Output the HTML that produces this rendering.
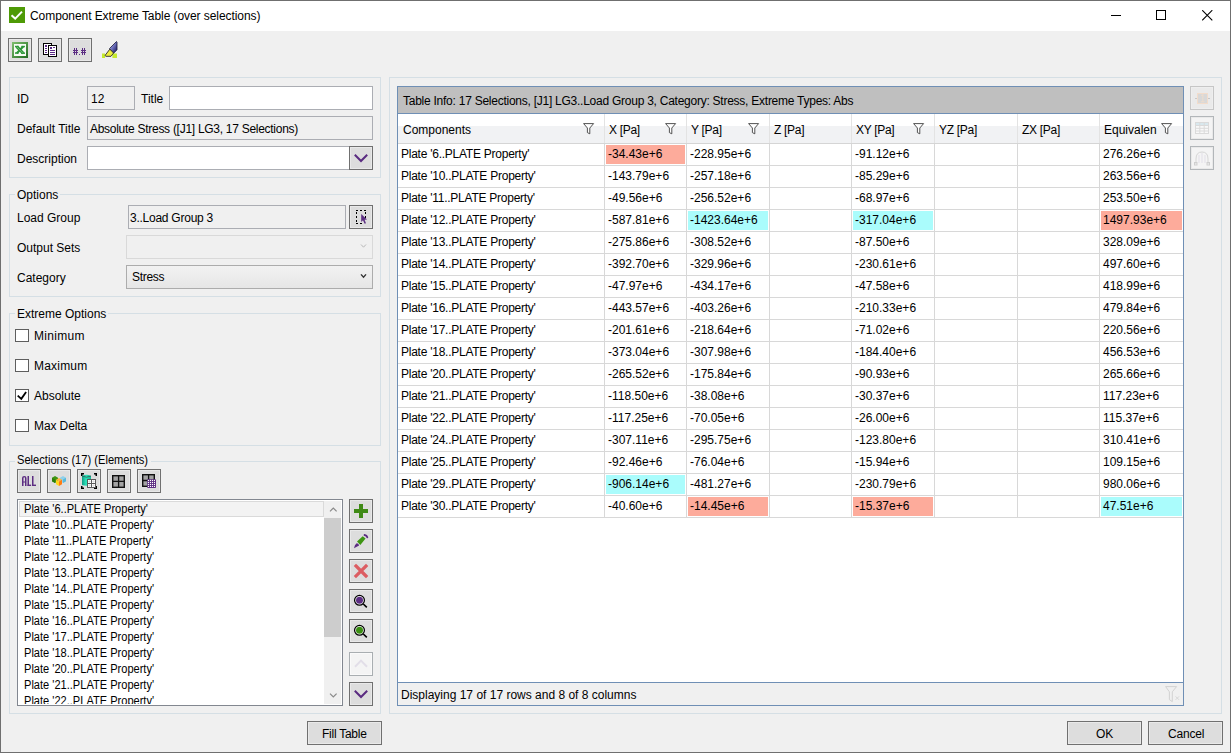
<!DOCTYPE html>
<html><head><meta charset="utf-8"><style>
html,body{margin:0;padding:0;width:1231px;height:753px;overflow:hidden;background:#f0f0f0}
body div{position:absolute}
svg{position:absolute}
.t{font-family:"Liberation Sans",sans-serif;white-space:pre;color:#000}
</style></head><body>
<div style="left:0px;top:0px;width:1231px;height:753px;background:#f0f0f0;border:1px solid #6f6f6f;box-sizing:border-box"></div>
<div style="left:1px;top:1px;width:1229px;height:30px;background:#fff"></div>
<div style="left:9px;top:7px;width:16px;height:16px;background:#4e9a06"></div>
<svg style="position:absolute;left:9px;top:7px" width="16" height="16"><path d="M2.5 8.2 L6.2 11.6 L13 4.6" fill="none" stroke="#fff" stroke-width="2"/></svg>
<div class="t" style="left:30px;top:10px;font-size:12px;line-height:12px;color:#000;letter-spacing:-0.07px">Component Extreme Table (over selections)</div>
<div style="left:1111px;top:15px;width:10px;height:1px;background:#000"></div>
<div style="left:1156px;top:10px;width:10px;height:10px;border:1px solid #000;box-sizing:border-box"></div>
<svg style="position:absolute;left:1202px;top:10px" width="11" height="11"><path d="M0.2 0.2 L10.3 10.3 M10.3 0.2 L0.2 10.3" stroke="#000" stroke-width="1.1"/></svg>
<div style="left:8px;top:38px;width:24px;height:24px;background:#dddddd;border:1px solid #707070;box-sizing:border-box;box-shadow:inset 0 0 0 1px #e9e9e9"></div>
<div style="left:38px;top:38px;width:24px;height:24px;background:#dddddd;border:1px solid #707070;box-sizing:border-box;box-shadow:inset 0 0 0 1px #e9e9e9"></div>
<div style="left:68px;top:38px;width:24px;height:24px;background:#dddddd;border:1px solid #707070;box-sizing:border-box;box-shadow:inset 0 0 0 1px #e9e9e9"></div>
<svg style="position:absolute;left:8px;top:38px" width="24" height="24"><defs><linearGradient id="xg" x1="0" y1="0" x2="1" y2="1"><stop offset="0" stop-color="#7fbf6f"/><stop offset="1" stop-color="#1f6a1f"/></linearGradient></defs><rect x="4" y="4" width="16" height="16" fill="url(#xg)"/><rect x="6" y="6" width="12" height="12" fill="#f6fbf4"/><g fill="#2c9638"><rect x="7" y="7.8" width="3.6" height="1.5"/><rect x="13.3" y="7.8" width="3.6" height="1.5"/><rect x="7" y="14.3" width="3.6" height="1.5"/><rect x="13.1" y="14.4" width="3.9" height="1.5"/></g><path d="M8.8 8.6 L15.2 15.2" stroke="#2c9638" stroke-width="3"/><path d="M15.2 8.6 L8.8 15.2" stroke="#2c9638" stroke-width="2.2"/><path d="M9 8.9 L14.6 14.8" stroke="#9bd79b" stroke-width="0.6"/></svg>
<svg style="position:absolute;left:38px;top:38px" width="24" height="24" shape-rendering="crispEdges"><rect x="5" y="5" width="9" height="12" fill="#000"/><rect x="6" y="6" width="7" height="10" fill="#fff"/><rect x="7" y="7" width="2" height="2" fill="#5b2a86"/><rect x="7" y="10" width="2" height="1" fill="#5b2a86"/><rect x="7" y="12" width="2" height="1" fill="#5b2a86"/><rect x="7" y="14" width="2" height="1" fill="#5b2a86"/><rect x="10" y="7" width="9" height="12" fill="#000"/><rect x="11" y="8" width="7" height="10" fill="#fff"/><rect x="12" y="9" width="2" height="2" fill="#5b2a86"/><rect x="15" y="9" width="2" height="1" fill="#5b2a86"/><rect x="12" y="12" width="5" height="1" fill="#5b2a86"/><rect x="12" y="14" width="5" height="1" fill="#5b2a86"/><rect x="12" y="16" width="5" height="1" fill="#5b2a86"/></svg>
<svg style="position:absolute;left:68px;top:38px" width="24" height="24" shape-rendering="crispEdges"><g fill="#5c2d82"><rect x="6" y="10" width="1" height="7"/><rect x="8" y="10" width="1" height="7"/><rect x="5" y="12" width="5" height="1"/><rect x="5" y="14" width="5" height="1"/><rect x="14" y="10" width="1" height="7"/><rect x="16" y="10" width="1" height="7"/><rect x="13" y="12" width="5" height="1"/><rect x="13" y="14" width="5" height="1"/><rect x="11" y="16" width="1" height="1"/></g></svg>
<svg style="position:absolute;left:96px;top:36px" width="28" height="28"><defs><linearGradient id="hg" x1="0" y1="0" x2="1" y2="1"><stop offset="0" stop-color="#c0c4f4"/><stop offset="0.5" stop-color="#6a6cb8"/><stop offset="1" stop-color="#0c0c50"/></linearGradient></defs><rect x="6" y="17.5" width="3" height="4.5" fill="#c6ea2e"/><rect x="16.4" y="17.5" width="4.6" height="4.5" fill="#c6ea2e"/><path d="M13.5 12.5 L20.5 5.5 L21 6 L21 13.8 L17.5 17.3 Z" fill="url(#hg)" stroke="#1a1a3a" stroke-width="0.8"/><path d="M9 19.5 L13.8 13.2 L17.6 17 L15 20.3 L10 20.3 Z" fill="#eeee3c" stroke="#2a2a2a" stroke-width="0.9"/></svg>
<div style="left:9px;top:77px;width:372px;height:101px;border:1px solid #d5dfe5;box-sizing:border-box"></div>
<div class="t" style="left:17px;top:93px;font-size:12px;line-height:12px;color:#000;">ID</div>
<div style="left:87px;top:86px;width:48px;height:24px;background:#f0f0f0;border:1px solid #abadb3;box-sizing:border-box"></div>
<div class="t" style="left:91px;top:93px;font-size:12px;line-height:12px;color:#000;">12</div>
<div class="t" style="left:141px;top:93px;font-size:12px;line-height:12px;color:#000;">Title</div>
<div style="left:169px;top:86px;width:204px;height:24px;background:#fff;border:1px solid #abadb3;box-sizing:border-box"></div>
<div class="t" style="left:17px;top:123px;font-size:12px;line-height:12px;color:#000;">Default Title</div>
<div style="left:87px;top:116px;width:286px;height:24px;background:#f0f0f0;border:1px solid #abadb3;box-sizing:border-box"></div>
<div class="t" style="left:90px;top:123px;font-size:12px;line-height:12px;color:#000;letter-spacing:-0.28px">Absolute Stress ([J1] LG3, 17 Selections)</div>
<div class="t" style="left:17px;top:153px;font-size:12px;line-height:12px;color:#000;">Description</div>
<div style="left:87px;top:146px;width:264px;height:24px;background:#fff;border:1px solid #abadb3;box-sizing:border-box"></div>
<div style="left:349px;top:146px;width:24px;height:24px;background:#dddddd;border:1px solid #707070;box-sizing:border-box;box-shadow:inset 0 0 0 1px #e9e9e9"></div>
<svg style="position:absolute;left:349px;top:146px" width="24" height="24"><path d="M5.8 8.8 L12 15 L18.2 8.8" fill="none" stroke="#5a2b80" stroke-width="2"/></svg>
<div style="left:9px;top:194px;width:372px;height:103px;border:1px solid #d5dfe5;box-sizing:border-box"></div>
<div style="left:15px;top:193px;width:45px;height:3px;background:#f0f0f0"></div>
<div class="t" style="left:17px;top:189px;font-size:12px;line-height:12px;color:#000;">Options</div>
<div class="t" style="left:17px;top:212px;font-size:12px;line-height:12px;color:#000;">Load Group</div>
<div style="left:128px;top:205px;width:218px;height:24px;background:#f0f0f0;border:1px solid #abadb3;box-sizing:border-box"></div>
<div class="t" style="left:130px;top:212px;font-size:12px;line-height:12px;color:#000;letter-spacing:-0.25px">3..Load Group 3</div>
<div style="left:349px;top:205px;width:24px;height:24px;background:#dddddd;border:1px solid #707070;box-sizing:border-box;box-shadow:inset 0 0 0 1px #e9e9e9"></div>
<svg style="position:absolute;left:349px;top:205px" width="24" height="24" shape-rendering="crispEdges"><g fill="#000"><rect x="7" y="5" width="2" height="1"/><rect x="11" y="5" width="2" height="1"/><rect x="15" y="5" width="2" height="1"/><rect x="7" y="18" width="2" height="1"/><rect x="11" y="18" width="2" height="1"/><rect x="7" y="7" width="1" height="2"/><rect x="7" y="11" width="1" height="2"/><rect x="7" y="15" width="1" height="2"/><rect x="16" y="7" width="1" height="2"/><rect x="16" y="11" width="1" height="2"/></g><path d="M12.2 9 L12.2 17 L14 15.2 L15.6 18.8 L17 18.2 L15.5 14.8 L18 14.5 Z" fill="#5c2d82" shape-rendering="auto"/></svg>
<div class="t" style="left:17px;top:242px;font-size:12px;line-height:12px;color:#000;">Output Sets</div>
<div style="left:126px;top:235px;width:247px;height:24px;background:#f0f0f0;border:1px solid #d9d9d9;box-sizing:border-box"></div>
<svg style="position:absolute;left:358px;top:241px" width="10" height="10"><path d="M3 3.5 L5.5 6.2 L8 3.5" fill="none" stroke="#b8b8b8" stroke-width="1"/></svg>
<div class="t" style="left:17px;top:272px;font-size:12px;line-height:12px;color:#000;">Category</div>
<div style="left:126px;top:265px;width:247px;height:24px;background:linear-gradient(#f2f2f2,#e6e6e6);border:1px solid #acacac;box-sizing:border-box"></div>
<div class="t" style="left:132px;top:271px;font-size:12px;line-height:12px;color:#000;letter-spacing:-0.3px">Stress</div>
<svg style="position:absolute;left:358px;top:271px" width="10" height="10"><path d="M3 3.4 L5.5 6.2 L8 3.4" fill="none" stroke="#333" stroke-width="1.4"/></svg>
<div style="left:9px;top:313px;width:372px;height:133px;border:1px solid #d5dfe5;box-sizing:border-box"></div>
<div style="left:15px;top:312px;width:93px;height:3px;background:#f0f0f0"></div>
<div class="t" style="left:17px;top:308px;font-size:12px;line-height:12px;color:#000;">Extreme Options</div>
<div style="left:15px;top:329px;width:14px;height:13px;background:#fff;border:1px solid #5e5e5e;box-sizing:border-box"></div>
<div class="t" style="left:34px;top:330px;font-size:12px;line-height:12px;color:#000;letter-spacing:0.3px">Minimum</div>
<div style="left:15px;top:359px;width:14px;height:13px;background:#fff;border:1px solid #5e5e5e;box-sizing:border-box"></div>
<div class="t" style="left:34px;top:360px;font-size:12px;line-height:12px;color:#000;letter-spacing:0.2px">Maximum</div>
<div style="left:15px;top:389px;width:14px;height:13px;background:#fff;border:1px solid #5e5e5e;box-sizing:border-box"></div>
<svg style="position:absolute;left:15px;top:389px" width="14" height="13"><path d="M2.7 6.6 L6.3 9.8 L11.1 2.9" fill="none" stroke="#000" stroke-width="1.8"/></svg>
<div class="t" style="left:34px;top:390px;font-size:12px;line-height:12px;color:#000;">Absolute</div>
<div style="left:15px;top:419px;width:14px;height:13px;background:#fff;border:1px solid #5e5e5e;box-sizing:border-box"></div>
<div class="t" style="left:34px;top:420px;font-size:12px;line-height:12px;color:#000;letter-spacing:-0.1px">Max Delta</div>
<div style="left:9px;top:461px;width:372px;height:253px;border:1px solid #d5dfe5;box-sizing:border-box"></div>
<div style="left:15px;top:460px;width:136px;height:3px;background:#f0f0f0"></div>
<div class="t" style="left:17px;top:454px;font-size:12px;line-height:12px;color:#000;transform:scaleX(0.927);transform-origin:0 0">Selections (17) (Elements)</div>
<div style="left:17px;top:469px;width:24px;height:24px;background:#dddddd;border:1px solid #707070;box-sizing:border-box;box-shadow:inset 0 0 0 1px #e9e9e9"></div>
<div style="left:47px;top:469px;width:24px;height:24px;background:#dddddd;border:1px solid #707070;box-sizing:border-box;box-shadow:inset 0 0 0 1px #e9e9e9"></div>
<div style="left:77px;top:469px;width:24px;height:24px;background:#dddddd;border:1px solid #707070;box-sizing:border-box;box-shadow:inset 0 0 0 1px #e9e9e9"></div>
<div style="left:107px;top:469px;width:24px;height:24px;background:#dddddd;border:1px solid #707070;box-sizing:border-box;box-shadow:inset 0 0 0 1px #e9e9e9"></div>
<div style="left:137px;top:469px;width:24px;height:24px;background:#dddddd;border:1px solid #707070;box-sizing:border-box;box-shadow:inset 0 0 0 1px #e9e9e9"></div>
<svg style="position:absolute;left:17px;top:469px" width="24" height="24"><g fill="#5c2d82"><path fill-rule="evenodd" d="M5 17 V9 Q5 7 7.25 7 Q9.5 7 9.5 9 V17 H8 V13.6 H6.5 V17 Z M6.5 12.4 H8 V9.2 Q8 8.3 7.25 8.3 Q6.5 8.3 6.5 9.2 Z"/><rect x="10.5" y="7" width="1.5" height="10"/><rect x="10.5" y="15.6" width="3.6" height="1.4"/><rect x="15" y="7" width="1.5" height="10"/><rect x="15" y="15.6" width="4" height="1.4"/></g></svg>
<svg style="position:absolute;left:47px;top:469px" width="24" height="24"><path d="M8 7 L11 8.7 L11 12.3 L8 14 L5 12.3 L5 8.7 Z" fill="#3f9612"/><path d="M5 8.7 L8 10.4 L8 14 L5 12.3 Z" fill="#2e7e0c"/><path d="M16 7 L19 8.7 L19 12.3 L16 14 L13 12.3 L13 8.7 Z" fill="#8fd0ea"/><path d="M16 10.4 L19 8.7 L19 12.3 L16 14 Z" fill="#56b9dd"/><path d="M12 9 L15 10.8 L12 12.6 L9 10.8 Z" fill="#ffb444"/><path d="M9 10.8 L12 12.6 L12 17 L9 15.2 Z" fill="#ffd51e"/><path d="M12 12.6 L15 10.8 L15 15.2 L12 17 Z" fill="#ff7c12"/></svg>
<svg style="position:absolute;left:77px;top:469px" width="24" height="24"><g fill="#000"><rect x="4" y="4" width="3" height="1.5"/><rect x="4" y="4" width="1.5" height="3"/><rect x="17" y="4" width="3" height="1.5"/><rect x="18.5" y="4" width="1.5" height="3"/><rect x="4" y="18.5" width="3" height="1.5"/><rect x="4" y="17" width="1.5" height="3"/><rect x="17" y="18.5" width="3" height="1.5"/><rect x="18.5" y="17" width="1.5" height="3"/></g><defs><linearGradient id="cg" x1="0" y1="0" x2="1" y2="0"><stop offset="0" stop-color="#0f9a84"/><stop offset="0.45" stop-color="#2ee6bc"/><stop offset="1" stop-color="#15b496"/></linearGradient></defs><path d="M5 7 Q9.5 4.6 14 7 V16 Q9.5 17.6 5 16 Z" fill="url(#cg)"/><path d="M5 7 Q9.5 9.4 14 7" fill="none" stroke="#2a5a50" stroke-width="0.8"/><rect x="10.5" y="10.5" width="8" height="8" fill="#fff" stroke="#5a5a5a" stroke-width="1"/><path d="M14.5 10.5 V18.5 M10.5 14.5 H18.5" stroke="#5a5a5a" stroke-width="1"/><path d="M12.5 11 V14 M16.5 11 V14 M12.5 15 V18 M16.5 15 V18 M11 12.5 H14 M15 12.5 H18 M11 16.5 H14 M15 16.5 H18" stroke="#d0d0d0" stroke-width="0.5"/></svg>
<svg style="position:absolute;left:107px;top:469px" width="24" height="24"><rect x="5.7" y="6.7" width="11.6" height="11.6" fill="#a3a3a3" stroke="#111" stroke-width="1.4"/><path d="M11.6 6.7 V18.3 M5.7 12.4 H17.3" stroke="#111" stroke-width="1.3"/></svg>
<svg style="position:absolute;left:137px;top:469px" width="24" height="24"><rect x="5.7" y="5.7" width="11.6" height="11.6" fill="#a3a3a3" stroke="#111" stroke-width="1.4"/><path d="M11.6 5.7 V17.3 M5.7 11.5 H17.3" stroke="#111" stroke-width="1.3"/><rect x="10.2" y="10.2" width="8.8" height="8.8" rx="0.8" fill="#5c2d82"/><rect x="10.9" y="10.9" width="1.1" height="1.1" fill="#fff"/><rect x="10.9" y="12.9" width="1.1" height="1.1" fill="#fff"/><rect x="10.9" y="14.9" width="1.1" height="1.1" fill="#fff"/><rect x="10.9" y="16.9" width="1.1" height="1.1" fill="#fff"/><rect x="12.9" y="10.9" width="1.1" height="1.1" fill="#fff"/><rect x="12.9" y="12.9" width="1.1" height="1.1" fill="#fff"/><rect x="12.9" y="14.9" width="1.1" height="1.1" fill="#fff"/><rect x="12.9" y="16.9" width="1.1" height="1.1" fill="#fff"/><rect x="14.9" y="10.9" width="1.1" height="1.1" fill="#fff"/><rect x="14.9" y="12.9" width="1.1" height="1.1" fill="#fff"/><rect x="14.9" y="14.9" width="1.1" height="1.1" fill="#fff"/><rect x="14.9" y="16.9" width="1.1" height="1.1" fill="#fff"/><rect x="16.9" y="10.9" width="1.1" height="1.1" fill="#fff"/><rect x="16.9" y="12.9" width="1.1" height="1.1" fill="#fff"/><rect x="16.9" y="14.9" width="1.1" height="1.1" fill="#fff"/><rect x="16.9" y="16.9" width="1.1" height="1.1" fill="#fff"/></svg>
<div style="left:17px;top:499px;width:326px;height:207px;background:#fff;border:1px solid #828790;box-sizing:border-box"></div>
<div style="left:19px;top:501px;width:305px;height:16px;background:#f3f3f3;border:1px solid #dadada;box-sizing:border-box"></div>
<div style="left:18px;top:500px;width:306px;height:204px;overflow:hidden">
<div class="t" style="left:6px;top:3px;font-size:12px;line-height:12px;transform:scaleX(0.922);transform-origin:0 0">Plate '6..PLATE Property'</div>
<div class="t" style="left:6px;top:19px;font-size:12px;line-height:12px;transform:scaleX(0.922);transform-origin:0 0">Plate '10..PLATE Property'</div>
<div class="t" style="left:6px;top:35px;font-size:12px;line-height:12px;transform:scaleX(0.922);transform-origin:0 0">Plate '11..PLATE Property'</div>
<div class="t" style="left:6px;top:51px;font-size:12px;line-height:12px;transform:scaleX(0.922);transform-origin:0 0">Plate '12..PLATE Property'</div>
<div class="t" style="left:6px;top:67px;font-size:12px;line-height:12px;transform:scaleX(0.922);transform-origin:0 0">Plate '13..PLATE Property'</div>
<div class="t" style="left:6px;top:83px;font-size:12px;line-height:12px;transform:scaleX(0.922);transform-origin:0 0">Plate '14..PLATE Property'</div>
<div class="t" style="left:6px;top:99px;font-size:12px;line-height:12px;transform:scaleX(0.922);transform-origin:0 0">Plate '15..PLATE Property'</div>
<div class="t" style="left:6px;top:115px;font-size:12px;line-height:12px;transform:scaleX(0.922);transform-origin:0 0">Plate '16..PLATE Property'</div>
<div class="t" style="left:6px;top:131px;font-size:12px;line-height:12px;transform:scaleX(0.922);transform-origin:0 0">Plate '17..PLATE Property'</div>
<div class="t" style="left:6px;top:147px;font-size:12px;line-height:12px;transform:scaleX(0.922);transform-origin:0 0">Plate '18..PLATE Property'</div>
<div class="t" style="left:6px;top:163px;font-size:12px;line-height:12px;transform:scaleX(0.922);transform-origin:0 0">Plate '20..PLATE Property'</div>
<div class="t" style="left:6px;top:179px;font-size:12px;line-height:12px;transform:scaleX(0.922);transform-origin:0 0">Plate '21..PLATE Property'</div>
<div class="t" style="left:6px;top:195px;font-size:12px;line-height:12px;transform:scaleX(0.922);transform-origin:0 0">Plate '22..PLATE Property'</div>
</div>
<div style="left:324px;top:501px;width:17px;height:203px;background:#f0f0f0"></div>
<div style="left:324px;top:518px;width:17px;height:119px;background:#cdcdcd"></div>
<svg style="position:absolute;left:324px;top:500px" width="17" height="18"><path d="M6 11.3 L9.3 8 L12.6 11.3" fill="none" stroke="#8a8a8a" stroke-width="1.2"/></svg>
<svg style="position:absolute;left:324px;top:687px" width="17" height="18"><path d="M6 6.6 L9.3 9.9 L12.6 6.6" fill="none" stroke="#8a8a8a" stroke-width="1.2"/></svg>
<div style="left:349px;top:499px;width:24px;height:24px;background:#dddddd;border:1px solid #707070;box-sizing:border-box;box-shadow:inset 0 0 0 1px #e9e9e9"></div>
<div style="left:349px;top:529px;width:24px;height:24px;background:#dddddd;border:1px solid #707070;box-sizing:border-box;box-shadow:inset 0 0 0 1px #e9e9e9"></div>
<div style="left:349px;top:559px;width:24px;height:24px;background:#dddddd;border:1px solid #707070;box-sizing:border-box;box-shadow:inset 0 0 0 1px #e9e9e9"></div>
<div style="left:349px;top:589px;width:24px;height:24px;background:#dddddd;border:1px solid #707070;box-sizing:border-box;box-shadow:inset 0 0 0 1px #e9e9e9"></div>
<div style="left:349px;top:619px;width:24px;height:24px;background:#dddddd;border:1px solid #707070;box-sizing:border-box;box-shadow:inset 0 0 0 1px #e9e9e9"></div>
<div style="left:349px;top:682px;width:24px;height:24px;background:#dddddd;border:1px solid #707070;box-sizing:border-box;box-shadow:inset 0 0 0 1px #e9e9e9"></div>
<div style="left:349px;top:652px;width:24px;height:24px;background:#f4f4f4;border:1px solid #a9aeb1;box-sizing:border-box;box-shadow:inset 0 0 0 1px #fafafa"></div>
<svg style="position:absolute;left:349px;top:499px" width="24" height="24" shape-rendering="crispEdges"><rect x="10" y="5" width="4" height="14" fill="#3f8a16"/><rect x="5" y="10" width="14" height="4" fill="#3f8a16"/></svg>
<svg style="position:absolute;left:349px;top:529px" width="24" height="24"><path d="M8 12.4 L13.7 7.2 L16.6 9.6 L11.3 15.9 Z" fill="#3d9412"/><path d="M15.6 6 Q17.8 6.2 18.3 8.3" fill="none" stroke="#5c2d82" stroke-width="1.9" stroke-linecap="round"/><path d="M5 19.2 Q5.6 15.6 7.6 14.3 Q9.6 14.3 10.1 16.6 Z" fill="#5c2d82"/></svg>
<svg style="position:absolute;left:349px;top:559px" width="24" height="24"><path d="M7 7 L17 17 M17 7 L7 17" stroke="#dc5d62" stroke-width="3.2" stroke-linecap="square"/></svg>
<svg style="position:absolute;left:349px;top:589px" width="24" height="24"><circle cx="10.5" cy="11.3" r="4.9" fill="#fff" stroke="#000" stroke-width="1.3"/><circle cx="10.5" cy="11.3" r="3.5" fill="#5c2d82"/><path d="M14.3 15 L17.8 18.4" stroke="#000" stroke-width="1.6"/></svg>
<svg style="position:absolute;left:349px;top:619px" width="24" height="24"><circle cx="10.5" cy="11.3" r="4.9" fill="#fff" stroke="#000" stroke-width="1.3"/><circle cx="10.5" cy="11.3" r="3.5" fill="#3a8e12"/><path d="M14.3 15 L17.8 18.4" stroke="#000" stroke-width="1.6"/></svg>
<svg style="position:absolute;left:349px;top:652px" width="24" height="24"><path d="M6 14.8 L12 8.6 L18 14.8" fill="none" stroke="#e2dee8" stroke-width="2"/></svg>
<svg style="position:absolute;left:349px;top:682px" width="24" height="24"><path d="M5.8 8.8 L12 15 L18.2 8.8" fill="none" stroke="#5a2b80" stroke-width="2"/></svg>
<div style="left:307px;top:721px;width:75px;height:24px;background:#dddddd;border:1px solid #707070;box-sizing:border-box;box-shadow:inset 0 0 0 1px #e9e9e9"></div>
<div class="t" style="left:322px;top:728px;font-size:12px;line-height:12px;color:#000;letter-spacing:-0.25px">Fill Table</div>
<div style="left:389px;top:77px;width:833px;height:637px;border:1px solid #d5dfe5;box-sizing:border-box"></div>
<div style="left:397px;top:86px;width:787px;height:620px;background:#fff;border:1px solid #6f8fb5;box-sizing:border-box"></div>
<div style="left:398px;top:87px;width:785px;height:26px;background:#bfbfbf"></div>
<div style="left:398px;top:113px;width:785px;height:1px;background:#6f8fb5"></div>
<div class="t" style="left:403px;top:95px;font-size:12px;line-height:12px;color:#000;letter-spacing:-0.25px">Table Info: 17 Selections, [J1] LG3..Load Group 3, Category: Stress, Extreme Types: Abs</div>
<div style="left:398px;top:114px;width:785px;height:29px;background:linear-gradient(#ffffff 0%,#ffffff 40%,#f1f2f4 42%,#f1f2f4 100%)"></div>
<div style="left:398px;top:143px;width:785px;height:1px;background:#d5d5d5"></div>
<div style="left:604px;top:114px;width:1px;height:29px;background:#e3e3e3"></div>
<div style="left:604px;top:144px;width:1px;height:373px;background:#d8d8d8"></div>
<div style="left:686px;top:114px;width:1px;height:29px;background:#e3e3e3"></div>
<div style="left:686px;top:144px;width:1px;height:373px;background:#d8d8d8"></div>
<div style="left:769px;top:114px;width:1px;height:29px;background:#e3e3e3"></div>
<div style="left:769px;top:144px;width:1px;height:373px;background:#d8d8d8"></div>
<div style="left:851px;top:114px;width:1px;height:29px;background:#e3e3e3"></div>
<div style="left:851px;top:144px;width:1px;height:373px;background:#d8d8d8"></div>
<div style="left:934px;top:114px;width:1px;height:29px;background:#e3e3e3"></div>
<div style="left:934px;top:144px;width:1px;height:373px;background:#d8d8d8"></div>
<div style="left:1017px;top:114px;width:1px;height:29px;background:#e3e3e3"></div>
<div style="left:1017px;top:144px;width:1px;height:373px;background:#d8d8d8"></div>
<div style="left:1099px;top:114px;width:1px;height:29px;background:#e3e3e3"></div>
<div style="left:1099px;top:144px;width:1px;height:373px;background:#d8d8d8"></div>
<div class="t" style="left:403px;top:124px;font-size:12px;line-height:12px;color:#000;">Components</div>
<svg style="position:absolute;left:583px;top:123px" width="13" height="13"><path d="M0.6 0.6 H10.6 L6.8 5 V10.8 L4.4 9.6 V5 Z" fill="#fff" stroke="#404040" stroke-width="0.9" stroke-linejoin="round"/></svg>
<div class="t" style="left:609px;top:124px;font-size:12px;line-height:12px;color:#000;letter-spacing:-0.3px">X [Pa]</div>
<svg style="position:absolute;left:665px;top:123px" width="13" height="13"><path d="M0.6 0.6 H10.6 L6.8 5 V10.8 L4.4 9.6 V5 Z" fill="#fff" stroke="#404040" stroke-width="0.9" stroke-linejoin="round"/></svg>
<div class="t" style="left:691px;top:124px;font-size:12px;line-height:12px;color:#000;letter-spacing:-0.3px">Y [Pa]</div>
<svg style="position:absolute;left:748px;top:123px" width="13" height="13"><path d="M0.6 0.6 H10.6 L6.8 5 V10.8 L4.4 9.6 V5 Z" fill="#fff" stroke="#404040" stroke-width="0.9" stroke-linejoin="round"/></svg>
<div class="t" style="left:774px;top:124px;font-size:12px;line-height:12px;color:#000;letter-spacing:-0.3px">Z [Pa]</div>
<div class="t" style="left:856px;top:124px;font-size:12px;line-height:12px;color:#000;letter-spacing:-0.3px">XY [Pa]</div>
<svg style="position:absolute;left:913px;top:123px" width="13" height="13"><path d="M0.6 0.6 H10.6 L6.8 5 V10.8 L4.4 9.6 V5 Z" fill="#fff" stroke="#404040" stroke-width="0.9" stroke-linejoin="round"/></svg>
<div class="t" style="left:939px;top:124px;font-size:12px;line-height:12px;color:#000;letter-spacing:-0.3px">YZ [Pa]</div>
<div class="t" style="left:1022px;top:124px;font-size:12px;line-height:12px;color:#000;letter-spacing:-0.3px">ZX [Pa]</div>
<div class="t" style="left:1104px;top:124px;font-size:12px;line-height:12px;color:#000;">Equivalen</div>
<svg style="position:absolute;left:1161px;top:123px" width="13" height="13"><path d="M0.6 0.6 H10.6 L6.8 5 V10.8 L4.4 9.6 V5 Z" fill="#fff" stroke="#404040" stroke-width="0.9" stroke-linejoin="round"/></svg>
<div style="left:398px;top:165px;width:785px;height:1px;background:#d8d8d8"></div>
<div class="t" style="left:401px;top:148px;font-size:12px;line-height:12px;color:#000;letter-spacing:-0.25px">Plate '6..PLATE Property'</div>
<div style="left:606px;top:145px;width:79px;height:19px;background:#fdab9b"></div>
<div class="t" style="left:608px;top:148px;font-size:12px;line-height:12px;color:#000;">-34.43e+6</div>
<div class="t" style="left:690px;top:148px;font-size:12px;line-height:12px;color:#000;">-228.95e+6</div>
<div class="t" style="left:855px;top:148px;font-size:12px;line-height:12px;color:#000;">-91.12e+6</div>
<div class="t" style="left:1103px;top:148px;font-size:12px;line-height:12px;color:#000;">276.26e+6</div>
<div style="left:398px;top:187px;width:785px;height:1px;background:#d8d8d8"></div>
<div class="t" style="left:401px;top:170px;font-size:12px;line-height:12px;color:#000;letter-spacing:-0.25px">Plate '10..PLATE Property'</div>
<div class="t" style="left:608px;top:170px;font-size:12px;line-height:12px;color:#000;">-143.79e+6</div>
<div class="t" style="left:690px;top:170px;font-size:12px;line-height:12px;color:#000;">-257.18e+6</div>
<div class="t" style="left:855px;top:170px;font-size:12px;line-height:12px;color:#000;">-85.29e+6</div>
<div class="t" style="left:1103px;top:170px;font-size:12px;line-height:12px;color:#000;">263.56e+6</div>
<div style="left:398px;top:209px;width:785px;height:1px;background:#d8d8d8"></div>
<div class="t" style="left:401px;top:192px;font-size:12px;line-height:12px;color:#000;letter-spacing:-0.25px">Plate '11..PLATE Property'</div>
<div class="t" style="left:608px;top:192px;font-size:12px;line-height:12px;color:#000;">-49.56e+6</div>
<div class="t" style="left:690px;top:192px;font-size:12px;line-height:12px;color:#000;">-256.52e+6</div>
<div class="t" style="left:855px;top:192px;font-size:12px;line-height:12px;color:#000;">-68.97e+6</div>
<div class="t" style="left:1103px;top:192px;font-size:12px;line-height:12px;color:#000;">253.50e+6</div>
<div style="left:398px;top:231px;width:785px;height:1px;background:#d8d8d8"></div>
<div class="t" style="left:401px;top:214px;font-size:12px;line-height:12px;color:#000;letter-spacing:-0.25px">Plate '12..PLATE Property'</div>
<div class="t" style="left:608px;top:214px;font-size:12px;line-height:12px;color:#000;">-587.81e+6</div>
<div style="left:688px;top:211px;width:80px;height:19px;background:#aafcfc"></div>
<div class="t" style="left:690px;top:214px;font-size:12px;line-height:12px;color:#000;">-1423.64e+6</div>
<div style="left:853px;top:211px;width:80px;height:19px;background:#aafcfc"></div>
<div class="t" style="left:855px;top:214px;font-size:12px;line-height:12px;color:#000;">-317.04e+6</div>
<div style="left:1101px;top:211px;width:81px;height:19px;background:#fdab9b"></div>
<div class="t" style="left:1103px;top:214px;font-size:12px;line-height:12px;color:#000;">1497.93e+6</div>
<div style="left:398px;top:253px;width:785px;height:1px;background:#d8d8d8"></div>
<div class="t" style="left:401px;top:236px;font-size:12px;line-height:12px;color:#000;letter-spacing:-0.25px">Plate '13..PLATE Property'</div>
<div class="t" style="left:608px;top:236px;font-size:12px;line-height:12px;color:#000;">-275.86e+6</div>
<div class="t" style="left:690px;top:236px;font-size:12px;line-height:12px;color:#000;">-308.52e+6</div>
<div class="t" style="left:855px;top:236px;font-size:12px;line-height:12px;color:#000;">-87.50e+6</div>
<div class="t" style="left:1103px;top:236px;font-size:12px;line-height:12px;color:#000;">328.09e+6</div>
<div style="left:398px;top:275px;width:785px;height:1px;background:#d8d8d8"></div>
<div class="t" style="left:401px;top:258px;font-size:12px;line-height:12px;color:#000;letter-spacing:-0.25px">Plate '14..PLATE Property'</div>
<div class="t" style="left:608px;top:258px;font-size:12px;line-height:12px;color:#000;">-392.70e+6</div>
<div class="t" style="left:690px;top:258px;font-size:12px;line-height:12px;color:#000;">-329.96e+6</div>
<div class="t" style="left:855px;top:258px;font-size:12px;line-height:12px;color:#000;">-230.61e+6</div>
<div class="t" style="left:1103px;top:258px;font-size:12px;line-height:12px;color:#000;">497.60e+6</div>
<div style="left:398px;top:297px;width:785px;height:1px;background:#d8d8d8"></div>
<div class="t" style="left:401px;top:280px;font-size:12px;line-height:12px;color:#000;letter-spacing:-0.25px">Plate '15..PLATE Property'</div>
<div class="t" style="left:608px;top:280px;font-size:12px;line-height:12px;color:#000;">-47.97e+6</div>
<div class="t" style="left:690px;top:280px;font-size:12px;line-height:12px;color:#000;">-434.17e+6</div>
<div class="t" style="left:855px;top:280px;font-size:12px;line-height:12px;color:#000;">-47.58e+6</div>
<div class="t" style="left:1103px;top:280px;font-size:12px;line-height:12px;color:#000;">418.99e+6</div>
<div style="left:398px;top:319px;width:785px;height:1px;background:#d8d8d8"></div>
<div class="t" style="left:401px;top:302px;font-size:12px;line-height:12px;color:#000;letter-spacing:-0.25px">Plate '16..PLATE Property'</div>
<div class="t" style="left:608px;top:302px;font-size:12px;line-height:12px;color:#000;">-443.57e+6</div>
<div class="t" style="left:690px;top:302px;font-size:12px;line-height:12px;color:#000;">-403.26e+6</div>
<div class="t" style="left:855px;top:302px;font-size:12px;line-height:12px;color:#000;">-210.33e+6</div>
<div class="t" style="left:1103px;top:302px;font-size:12px;line-height:12px;color:#000;">479.84e+6</div>
<div style="left:398px;top:341px;width:785px;height:1px;background:#d8d8d8"></div>
<div class="t" style="left:401px;top:324px;font-size:12px;line-height:12px;color:#000;letter-spacing:-0.25px">Plate '17..PLATE Property'</div>
<div class="t" style="left:608px;top:324px;font-size:12px;line-height:12px;color:#000;">-201.61e+6</div>
<div class="t" style="left:690px;top:324px;font-size:12px;line-height:12px;color:#000;">-218.64e+6</div>
<div class="t" style="left:855px;top:324px;font-size:12px;line-height:12px;color:#000;">-71.02e+6</div>
<div class="t" style="left:1103px;top:324px;font-size:12px;line-height:12px;color:#000;">220.56e+6</div>
<div style="left:398px;top:363px;width:785px;height:1px;background:#d8d8d8"></div>
<div class="t" style="left:401px;top:346px;font-size:12px;line-height:12px;color:#000;letter-spacing:-0.25px">Plate '18..PLATE Property'</div>
<div class="t" style="left:608px;top:346px;font-size:12px;line-height:12px;color:#000;">-373.04e+6</div>
<div class="t" style="left:690px;top:346px;font-size:12px;line-height:12px;color:#000;">-307.98e+6</div>
<div class="t" style="left:855px;top:346px;font-size:12px;line-height:12px;color:#000;">-184.40e+6</div>
<div class="t" style="left:1103px;top:346px;font-size:12px;line-height:12px;color:#000;">456.53e+6</div>
<div style="left:398px;top:385px;width:785px;height:1px;background:#d8d8d8"></div>
<div class="t" style="left:401px;top:368px;font-size:12px;line-height:12px;color:#000;letter-spacing:-0.25px">Plate '20..PLATE Property'</div>
<div class="t" style="left:608px;top:368px;font-size:12px;line-height:12px;color:#000;">-265.52e+6</div>
<div class="t" style="left:690px;top:368px;font-size:12px;line-height:12px;color:#000;">-175.84e+6</div>
<div class="t" style="left:855px;top:368px;font-size:12px;line-height:12px;color:#000;">-90.93e+6</div>
<div class="t" style="left:1103px;top:368px;font-size:12px;line-height:12px;color:#000;">265.66e+6</div>
<div style="left:398px;top:407px;width:785px;height:1px;background:#d8d8d8"></div>
<div class="t" style="left:401px;top:390px;font-size:12px;line-height:12px;color:#000;letter-spacing:-0.25px">Plate '21..PLATE Property'</div>
<div class="t" style="left:608px;top:390px;font-size:12px;line-height:12px;color:#000;">-118.50e+6</div>
<div class="t" style="left:690px;top:390px;font-size:12px;line-height:12px;color:#000;">-38.08e+6</div>
<div class="t" style="left:855px;top:390px;font-size:12px;line-height:12px;color:#000;">-30.37e+6</div>
<div class="t" style="left:1103px;top:390px;font-size:12px;line-height:12px;color:#000;">117.23e+6</div>
<div style="left:398px;top:429px;width:785px;height:1px;background:#d8d8d8"></div>
<div class="t" style="left:401px;top:412px;font-size:12px;line-height:12px;color:#000;letter-spacing:-0.25px">Plate '22..PLATE Property'</div>
<div class="t" style="left:608px;top:412px;font-size:12px;line-height:12px;color:#000;">-117.25e+6</div>
<div class="t" style="left:690px;top:412px;font-size:12px;line-height:12px;color:#000;">-70.05e+6</div>
<div class="t" style="left:855px;top:412px;font-size:12px;line-height:12px;color:#000;">-26.00e+6</div>
<div class="t" style="left:1103px;top:412px;font-size:12px;line-height:12px;color:#000;">115.37e+6</div>
<div style="left:398px;top:451px;width:785px;height:1px;background:#d8d8d8"></div>
<div class="t" style="left:401px;top:434px;font-size:12px;line-height:12px;color:#000;letter-spacing:-0.25px">Plate '24..PLATE Property'</div>
<div class="t" style="left:608px;top:434px;font-size:12px;line-height:12px;color:#000;">-307.11e+6</div>
<div class="t" style="left:690px;top:434px;font-size:12px;line-height:12px;color:#000;">-295.75e+6</div>
<div class="t" style="left:855px;top:434px;font-size:12px;line-height:12px;color:#000;">-123.80e+6</div>
<div class="t" style="left:1103px;top:434px;font-size:12px;line-height:12px;color:#000;">310.41e+6</div>
<div style="left:398px;top:473px;width:785px;height:1px;background:#d8d8d8"></div>
<div class="t" style="left:401px;top:456px;font-size:12px;line-height:12px;color:#000;letter-spacing:-0.25px">Plate '25..PLATE Property'</div>
<div class="t" style="left:608px;top:456px;font-size:12px;line-height:12px;color:#000;">-92.46e+6</div>
<div class="t" style="left:690px;top:456px;font-size:12px;line-height:12px;color:#000;">-76.04e+6</div>
<div class="t" style="left:855px;top:456px;font-size:12px;line-height:12px;color:#000;">-15.94e+6</div>
<div class="t" style="left:1103px;top:456px;font-size:12px;line-height:12px;color:#000;">109.15e+6</div>
<div style="left:398px;top:495px;width:785px;height:1px;background:#d8d8d8"></div>
<div class="t" style="left:401px;top:478px;font-size:12px;line-height:12px;color:#000;letter-spacing:-0.25px">Plate '29..PLATE Property'</div>
<div style="left:606px;top:475px;width:79px;height:19px;background:#aafcfc"></div>
<div class="t" style="left:608px;top:478px;font-size:12px;line-height:12px;color:#000;">-906.14e+6</div>
<div class="t" style="left:690px;top:478px;font-size:12px;line-height:12px;color:#000;">-481.27e+6</div>
<div class="t" style="left:855px;top:478px;font-size:12px;line-height:12px;color:#000;">-230.79e+6</div>
<div class="t" style="left:1103px;top:478px;font-size:12px;line-height:12px;color:#000;">980.06e+6</div>
<div style="left:398px;top:517px;width:785px;height:1px;background:#d8d8d8"></div>
<div class="t" style="left:401px;top:500px;font-size:12px;line-height:12px;color:#000;letter-spacing:-0.25px">Plate '30..PLATE Property'</div>
<div class="t" style="left:608px;top:500px;font-size:12px;line-height:12px;color:#000;">-40.60e+6</div>
<div style="left:688px;top:497px;width:80px;height:19px;background:#fdab9b"></div>
<div class="t" style="left:690px;top:500px;font-size:12px;line-height:12px;color:#000;">-14.45e+6</div>
<div style="left:853px;top:497px;width:80px;height:19px;background:#fdab9b"></div>
<div class="t" style="left:855px;top:500px;font-size:12px;line-height:12px;color:#000;">-15.37e+6</div>
<div style="left:1101px;top:497px;width:81px;height:19px;background:#aafcfc"></div>
<div class="t" style="left:1103px;top:500px;font-size:12px;line-height:12px;color:#000;">47.51e+6</div>
<div style="left:398px;top:682px;width:785px;height:1px;background:#6f8fb5"></div>
<div style="left:398px;top:683px;width:785px;height:22px;background:#f0f0f0"></div>
<div class="t" style="left:401px;top:689px;font-size:12px;line-height:12px;color:#000;">Displaying 17 of 17 rows and 8 of 8 columns</div>
<svg style="position:absolute;left:1165px;top:686px" width="17" height="17"><path d="M0.6 0.6 H11.6 L7.3 5.8 V15.6 L4.4 13.6 V5.8 Z" fill="none" stroke="#d2d2d2" stroke-width="1" stroke-linejoin="round"/><path d="M10.6 10.4 L14 13.8 M14 10.4 L10.6 13.8" stroke="#d6d6d6" stroke-width="1"/></svg>
<div style="left:1190px;top:86px;width:24px;height:24px;background:#eaeaea;border:1px solid #c6c6c6;box-sizing:border-box;box-shadow:inset 0 0 0 1px #eeeeee"></div>
<div style="left:1190px;top:116px;width:24px;height:24px;background:#f4f4f4;border:1px solid #b2b6b9;box-sizing:border-box;box-shadow:inset 0 0 0 1px #e9e9e9"></div>
<div style="left:1190px;top:146px;width:24px;height:24px;background:#f4f4f4;border:1px solid #b2b6b9;box-sizing:border-box;box-shadow:inset 0 0 0 1px #e9e9e9"></div>
<svg style="position:absolute;left:1190px;top:86px" width="24" height="24"><path d="M5 12.5 H7 M18 12.5 H20" stroke="#c8c8c8" stroke-width="1"/><rect x="7.5" y="7.5" width="10" height="10" fill="#d8d8d8" stroke="#f2dccb" stroke-width="1"/><path d="M11.3 9.8 L12.9 8.8 V15.6 M11 15.8 H14.6" fill="none" stroke="#ecdccd" stroke-width="1.1"/></svg>
<svg style="position:absolute;left:1190px;top:116px" width="24" height="24"><rect x="5.5" y="6.5" width="13" height="11" fill="#f8f8f8" stroke="#dadada"/><rect x="6" y="7" width="12" height="2.5" fill="#d8e8ee"/><path d="M5.5 9.5 H18.5 M5.5 12.3 H18.5 M5.5 15 H18.5 M9.8 6.5 V17.5 M14.2 6.5 V17.5" stroke="#dadada"/></svg>
<svg style="position:absolute;left:1190px;top:146px" width="24" height="24"><path d="M6 18 V13 Q6 6 12 6 Q18 6 18 13 V18" fill="none" stroke="#d6d6d6"/><path d="M9 9 V17 M12 7 V17 M15 9 V17" stroke="#e2dfe8"/><rect x="4.5" y="16.5" width="2.5" height="2.5" fill="none" stroke="#cfcfcf"/><rect x="17" y="16.5" width="2.5" height="2.5" fill="none" stroke="#cfcfcf"/></svg>
<div style="left:1067px;top:721px;width:75px;height:24px;background:#dddddd;border:1px solid #707070;box-sizing:border-box;box-shadow:inset 0 0 0 1px #e9e9e9"></div>
<div class="t" style="left:1096px;top:728px;font-size:12px;line-height:12px;color:#000;">OK</div>
<div style="left:1148px;top:721px;width:75px;height:24px;background:#dddddd;border:1px solid #707070;box-sizing:border-box;box-shadow:inset 0 0 0 1px #e9e9e9"></div>
<div class="t" style="left:1168px;top:728px;font-size:12px;line-height:12px;color:#000;letter-spacing:-0.2px">Cancel</div>
</body></html>
